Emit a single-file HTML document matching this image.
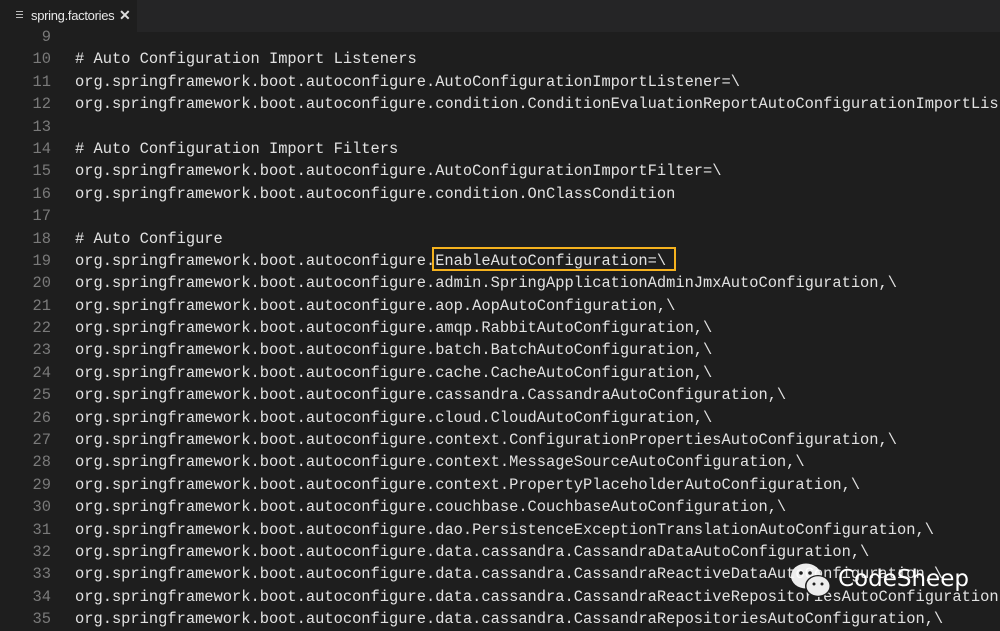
<!DOCTYPE html>
<html><head><meta charset="utf-8"><style>
html,body{margin:0;padding:0;width:1000px;height:628px;overflow:hidden;background:#1e1e1e;}
.tabbar{position:absolute;left:0;top:0;width:1000px;height:32px;background:#252526;}
.tab{position:absolute;left:0;top:0;width:137px;height:32px;background:#1e1e1e;font-family:"Liberation Sans",sans-serif;font-size:13px;color:#e8e8e8;}
.tab .ic{position:absolute;left:16px;top:11px;width:7px;}
.tab .ic i{display:block;height:1px;background:#bbb;margin-bottom:2px;}
.tab .nm{position:absolute;left:31px;top:8px;letter-spacing:-0.3px;}
.tab .x{position:absolute;left:119px;top:7px;font-size:14px;font-weight:bold;color:#ddd;}
.ed{position:absolute;left:0;top:26px;width:1000px;font-family:"Liberation Mono",monospace;font-size:15.4px;}
.l{height:22.4px;line-height:22.4px;position:relative;}
.n{position:absolute;left:0;width:51px;text-align:right;color:#7a7a7a;}
.c{position:absolute;left:75px;color:#e2e2e2;white-space:pre;}
.box{position:absolute;left:432px;top:247px;width:240px;height:20px;border:2.5px solid #f5b21e;}
.wm{position:absolute;left:790px;top:562px;}
.wmt{position:absolute;left:838px;top:566px;font-family:"DejaVu Sans","Liberation Sans",sans-serif;font-size:23px;color:#fff;}
</style></head><body>
<div class="tabbar"><div class="tab"><div class="ic"><i></i><i></i><i></i></div><span class="nm">spring.factories</span><span class="x">✕</span></div></div>
<div class="ed"><div class="l"><span class="n">9</span></div><div class="l"><span class="n">10</span><span class="c"># Auto Configuration Import Listeners</span></div><div class="l"><span class="n">11</span><span class="c">org.springframework.boot.autoconfigure.AutoConfigurationImportListener=\</span></div><div class="l"><span class="n">12</span><span class="c">org.springframework.boot.autoconfigure.condition.ConditionEvaluationReportAutoConfigurationImportListener</span></div><div class="l"><span class="n">13</span></div><div class="l"><span class="n">14</span><span class="c"># Auto Configuration Import Filters</span></div><div class="l"><span class="n">15</span><span class="c">org.springframework.boot.autoconfigure.AutoConfigurationImportFilter=\</span></div><div class="l"><span class="n">16</span><span class="c">org.springframework.boot.autoconfigure.condition.OnClassCondition</span></div><div class="l"><span class="n">17</span></div><div class="l"><span class="n">18</span><span class="c"># Auto Configure</span></div><div class="l"><span class="n">19</span><span class="c">org.springframework.boot.autoconfigure.EnableAutoConfiguration=\</span></div><div class="l"><span class="n">20</span><span class="c">org.springframework.boot.autoconfigure.admin.SpringApplicationAdminJmxAutoConfiguration,\</span></div><div class="l"><span class="n">21</span><span class="c">org.springframework.boot.autoconfigure.aop.AopAutoConfiguration,\</span></div><div class="l"><span class="n">22</span><span class="c">org.springframework.boot.autoconfigure.amqp.RabbitAutoConfiguration,\</span></div><div class="l"><span class="n">23</span><span class="c">org.springframework.boot.autoconfigure.batch.BatchAutoConfiguration,\</span></div><div class="l"><span class="n">24</span><span class="c">org.springframework.boot.autoconfigure.cache.CacheAutoConfiguration,\</span></div><div class="l"><span class="n">25</span><span class="c">org.springframework.boot.autoconfigure.cassandra.CassandraAutoConfiguration,\</span></div><div class="l"><span class="n">26</span><span class="c">org.springframework.boot.autoconfigure.cloud.CloudAutoConfiguration,\</span></div><div class="l"><span class="n">27</span><span class="c">org.springframework.boot.autoconfigure.context.ConfigurationPropertiesAutoConfiguration,\</span></div><div class="l"><span class="n">28</span><span class="c">org.springframework.boot.autoconfigure.context.MessageSourceAutoConfiguration,\</span></div><div class="l"><span class="n">29</span><span class="c">org.springframework.boot.autoconfigure.context.PropertyPlaceholderAutoConfiguration,\</span></div><div class="l"><span class="n">30</span><span class="c">org.springframework.boot.autoconfigure.couchbase.CouchbaseAutoConfiguration,\</span></div><div class="l"><span class="n">31</span><span class="c">org.springframework.boot.autoconfigure.dao.PersistenceExceptionTranslationAutoConfiguration,\</span></div><div class="l"><span class="n">32</span><span class="c">org.springframework.boot.autoconfigure.data.cassandra.CassandraDataAutoConfiguration,\</span></div><div class="l"><span class="n">33</span><span class="c">org.springframework.boot.autoconfigure.data.cassandra.CassandraReactiveDataAutoConfiguration,\</span></div><div class="l"><span class="n">34</span><span class="c">org.springframework.boot.autoconfigure.data.cassandra.CassandraReactiveRepositoriesAutoConfiguration,\</span></div><div class="l"><span class="n">35</span><span class="c">org.springframework.boot.autoconfigure.data.cassandra.CassandraRepositoriesAutoConfiguration,\</span></div></div>
<div class="box"></div>
<svg class="wm" width="46" height="40" viewBox="0 0 46 40">
<ellipse cx="16" cy="14" rx="15" ry="12.5" fill="#fff" opacity="0.92"/>
<ellipse cx="28" cy="24" rx="13" ry="11" fill="#1e1e1e"/>
<ellipse cx="28" cy="24" rx="11.5" ry="9.8" fill="#fff" opacity="0.92"/>
<circle cx="11" cy="11" r="1.8" fill="#1e1e1e"/><circle cx="20" cy="11" r="1.8" fill="#1e1e1e"/>
<circle cx="24" cy="22" r="1.5" fill="#1e1e1e"/><circle cx="32" cy="22" r="1.5" fill="#1e1e1e"/>
</svg>
<div class="wmt">CodeSheep</div>
</body></html>
